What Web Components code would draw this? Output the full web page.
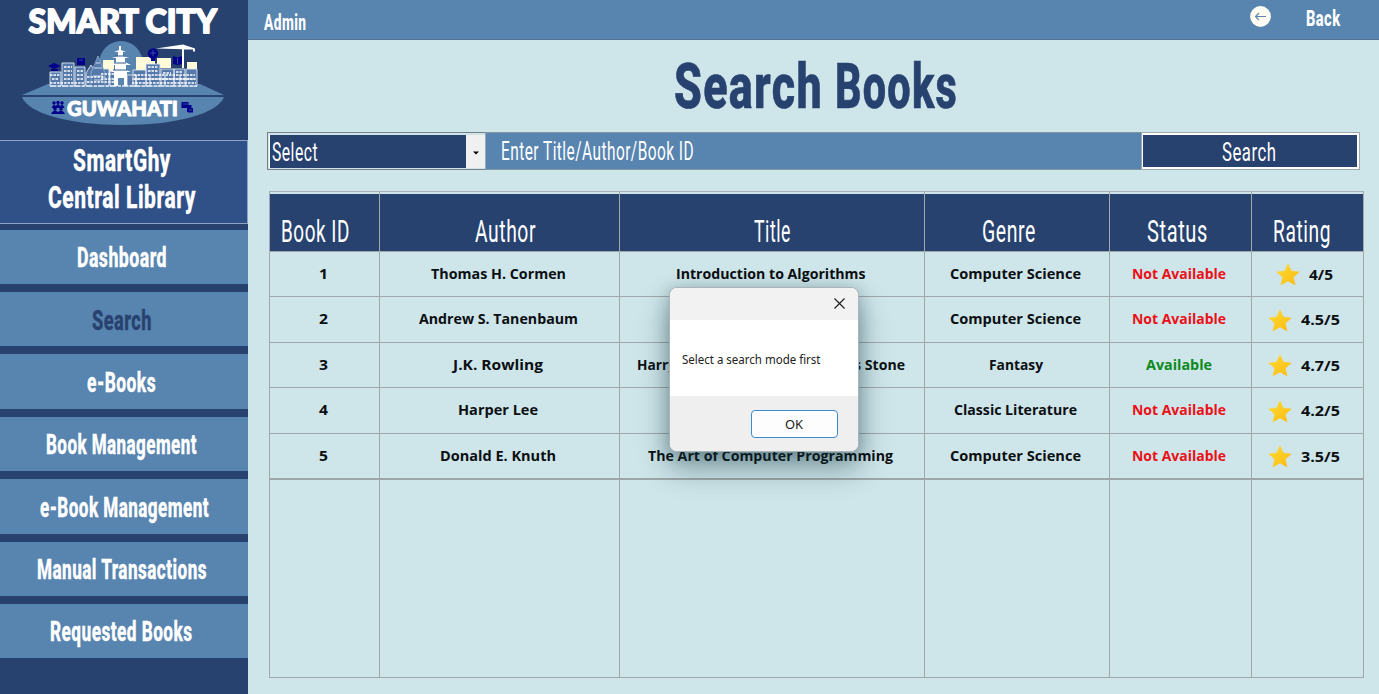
<!DOCTYPE html>
<html lang="en">
<head>
<meta charset="utf-8">
<title>SmartGhy Central Library</title>
<style>
html,body{margin:0;height:100%;overflow:hidden}
body{font-family:Roboto,"Liberation Sans",sans-serif}
</style>
</head>
<body>
<library-app></library-app>
<script>
const define = (name, html, setup) => customElements.define(name, class extends HTMLElement {
  connectedCallback() {
    if (this.shadowRoot) return;
    const root = this.attachShadow({mode: 'open'});
    root.innerHTML = html;
    if (setup) setup(this, root);
  }
});

/* Text condensed or expanded horizontally to a given width. */
customElements.define('fit-text', class extends HTMLElement {
  connectedCallback() {
    if (this.shadowRoot) return;
    const root = this.attachShadow({mode: 'open'});
    root.innerHTML = `<style>:host{display:inline-block;white-space:nowrap;line-height:1.172;flex:none}
      span{display:inline-block;transform-origin:0 50%}</style><span><slot></slot></span>`;
    const w = parseFloat(this.getAttribute('w'));
    this.style.width = w + 'px';
    const span = root.querySelector('span');
    const natural = span.getBoundingClientRect().width;
    if (natural) span.style.transform = `scaleX(${w / natural})`;
  }
});

define('city-logo', `<style>:host{display:block;height:139px}svg{display:block}
  text{font-family:Lato,"Open Sans",sans-serif;font-weight:900;fill:#fff;stroke:#fff;stroke-linejoin:round}</style>
<svg width="248" height="139" viewBox="0 0 248 139">
  <text x="28.500" y="32.500" font-size="32.500" textLength="188.500" lengthAdjust="spacingAndGlyphs" stroke-width="1.800">SMART CITY</text>
  <path d="M99 64a22 23 0 0 1 44 0v20H84q2-13 15-20z" fill="#5884b0"/>
  <path d="M22 95 48 84H200L224 95z" fill="#5884b0"/>
  <path d="M22 97H224C218 113 178 125 123 125S28 113 22 97z" fill="#5884b0"/>
  <g fill="#fffbd8"><path d="M103 60h11v18h-11zM136 57h19v13h-19zM157 58h14v10h-14zM187 62h10v15h-10z"/></g>
  <g fill="#5579aa" stroke="#dfe8f3" stroke-width=".9">
    <path d="M50 72h11v14H50zM62 63h12v23H62zM75 67h10v19H75zM86 73l5-8 5 8v13H86zM99 69h10v17H99zM110 71h7v15h-7zM127 75h9v11h-9zM133 70h13v16h-13zM146 64h14v22h-14zM161 69h13v17h-13zM174 69h11v17h-11zM186 69h11v17h-11z"/>
    <path d="M91 73l7-17 7 17v13H91z" stroke="#8aa8cb"/><path d="M94 68h8M96 63h4M93 76h10M94 80h9"/>
  </g>
  <path d="M50 75h10M52 79h7M50 83h34M64 67h8M64 71h8M64 75h8M64 79h8M77 71h6M77 75h6M77 79h6M87 77h18M87 82h28M101 74h14M101 79h14M134 75h61M134 79h61M132 83h64M148 67h10M148 71h10M163 73h8M176 72h7" stroke="#fff" stroke-width="1.500" stroke-dasharray="2.500 1"/>
  <path d="M132 79H196M136 75V86M150 75V86M165 75V86M180 75V86" stroke="#fff"/>
  <path d="M50 86H197" stroke="#dfe9f4" stroke-width="1.500" stroke-dasharray="6 2 3 1"/>
  <path d="M119 46h2v4l5 2h-3v4l6 2h-4v4l6 3h-5v5l5 2h-4v14h-3v-8h-6v8h-4V72h-4l5-2v-5h-5l6-3v-4h-4l6-2v-4h-4l5-2z" fill="#fff"/>
  <path d="M115 56h10M114 63h12M113 70h14" stroke="#36598f"/>
  <path d="M182 48h2v20h-2zM156 48.500l27-4 12 4v3h-2v-2z" fill="#fff"/>
  <g fill="#00008b"><circle cx="153" cy="53.500" r="5.200"/><path d="M151 58h4v3h-4zM77 58h8v7h-8zM173 56l4.500 1.500L182 56v8l-4.500 1-4.500-1zM48 66l6-3 7 3-7 3zM51 69h7v2h-7z"/>
    <circle cx="54" cy="103" r="1.700"/><circle cx="58" cy="102.500" r="1.700"/><circle cx="62" cy="103" r="1.700"/><circle cx="55" cy="109" r="1.700"/><circle cx="61" cy="109" r="1.700"/><path d="M51.500 108q2-5 4.500-2 2-4 4 0 3-3 4.500 2zM51 114q3-6 7-2 4-4 7 2z"/>
    <path d="M181.500 102h7v3h3v3h1.500v4h-6v-4h-5.500zM188 108h5v4.500h-5z"/></g>
  <path d="M153 50v6M150 53h6M177.500 58v6M79 60h4M183 104h5M189 110h3" stroke="#5579aa" stroke-width=".6"/>
  <text x="67" y="115.500" font-size="20.500" textLength="111" lengthAdjust="spacingAndGlyphs" stroke-width="1">GUWAHATI</text>
</svg>`);

define('nav-item', `<style>:host{display:flex;align-items:center;justify-content:center;height:54.300px;box-sizing:border-box;padding:2px 5px 0 0;background:#5884b0;color:#fff;font-weight:800;font-size:28.500px;letter-spacing:.025em;-webkit-text-stroke:.3px}
:host([active]){color:#284270}</style><slot></slot>`);

define('side-bar', `<style>:host{display:block;width:248px;background:#284270}
  .brand{height:84px;box-sizing:border-box;margin-top:1px;border:solid #8ba4c6;border-width:1px 1px 1.500px 0;background:#305088;color:#fff;font-weight:800;display:flex;flex-direction:column;align-items:center;padding:2px 4px 0 0;font-size:31.500px;letter-spacing:.025em;-webkit-text-stroke:.3px}
  nav{display:flex;flex-direction:column;gap:8.100px;margin-top:5.700px}</style>
<city-logo></city-logo>
<div class="brand"><fit-text w="98">SmartGhy</fit-text><fit-text w="148">Central Library</fit-text></div>
<nav>
<nav-item><fit-text w="90">Dashboard</fit-text></nav-item>
<nav-item active><fit-text w="60">Search</fit-text></nav-item>
<nav-item><fit-text w="69">e-Books</fit-text></nav-item>
<nav-item><fit-text w="151">Book Management</fit-text></nav-item>
<nav-item style="padding-right:0"><fit-text w="169">e-Book Management</fit-text></nav-item>
<nav-item><fit-text w="170">Manual Transactions</fit-text></nav-item>
<nav-item><fit-text w="142.500">Requested Books</fit-text></nav-item>
</nav>`);

define('top-bar', `<style>:host{display:flex;height:40px;box-sizing:border-box;background:#5884b0;border-bottom:1px solid #507594;color:#fff;font-weight:800;font-size:22.500px;padding:0 38.500px 0 16px;letter-spacing:.03em}
 .a{margin-top:9px}.b{margin-top:5px;margin-left:35px}svg{margin:6px 0 0 auto}</style>
<fit-text class="a" w="42.500">Admin</fit-text>
<svg width="21" height="21" viewBox="0 0 21 21"><circle cx="10.500" cy="10.500" r="10.400" fill="#fdfdf3"/><path d="M16 10.500H5.500M9 7l-3.500 3.500L9 14" fill="none" stroke="#5f86ac" stroke-width="1.200"/></svg>
<fit-text class="b" w="34.500">Back</fit-text>`);

define('search-bar', `<style>:host{display:flex;height:38px;width:1093px;font-size:26px;color:#fff;font-weight:400;letter-spacing:.03em}
 div{box-sizing:border-box;display:flex;align-items:center}
 .select{width:219px;border:1px solid #777f86;border-right-color:#9aa;padding:2px 0 1px 1px;background:#cfe4e9}
 .value{flex:1;height:100%;background:#284270;padding:2px 0 0 2px;border-left:1px solid #fff}
 .drop{width:19px;height:100%;background:#f0f0f0;justify-content:center;padding-top:3px}
 .input{flex:1;background:#5884b0;border:solid #8496a4;border-width:1px 0;padding-left:14.500px}
 .go{width:219px;border:1px solid #9da9ad;padding:0;background:#fff}
 .go div{flex:1;margin:1px 1px 1px 0;height:34px;background:#284270;justify-content:center;border:1px solid #fff;padding:2px 1px 0 0}</style>
<div class="select"><div class="value"><fit-text w="46">Select</fit-text></div><div class="drop"><svg width="6" height="4"><path d="M0 .5h6l-3 3z"/></svg></div></div>
<div class="input"><fit-text w="193">Enter Title/Author/Book ID</fit-text></div>
<div class="go"><div><fit-text w="54.500">Search</fit-text></div></div>`);

define('star-icon', `<style>:host{display:block;width:24px;height:23px}svg{display:block}</style>
<svg width="24" height="23" viewBox="0 0 24 23"><defs><linearGradient id="g" x2="1" y2="1"><stop offset="0" stop-color="#ffdc35"/><stop offset="1" stop-color="#fbb910"/></linearGradient></defs><path d="M12 .8 15.300 8l8 .900-6 5.300 1.800 7.800-7.100-4-7.100 4 1.800-7.800-6-5.300 8-.900z" fill="url(#g)" stroke="url(#g)" stroke-width=".5" stroke-linejoin="round"/></svg>`);

define('book-table', `<style>
 :host{display:grid;grid-template-columns:110px 240px 305px 185px 142px 112px;grid-template-rows:60px 45px 46px 45px 46px 46px 198px;width:1095px;border-left:1px solid #a0a8ab;border-top:1px solid #a5b2b5;box-sizing:border-box}
 .h,.c{box-sizing:border-box;border-right:1px solid #a0a8ab;border-bottom:1px solid #a0a8ab;display:flex;align-items:center;justify-content:center}
 .h{background:linear-gradient(#cfe4e9 2px,#284270 2px);color:#fff;font-size:32px;font-weight:400;letter-spacing:.03em;padding-top:19.500px}
 .c{font:700 14.600px/1 "Open Sans","Noto Sans",sans-serif;color:#0b0f12;padding:0 3px 1px 0}
 .c.last{border-bottom:2px solid #9fa6a9}
 .no{color:#ec1018}.yes{color:#0b8a1c}
 .r{gap:9px}
 .split{justify-content:space-between}</style>`, (host, root) => {
  const cell = (cls, html, style = '') => `<div class="${cls}" style="${style}">${html}</div>`;
  const fit = (text, w) => text ? `<fit-text w="${w}">${text}</fit-text>` : '';
  let out = '';
  [['Book ID', 69, 18], ['Author', 61, -11], ['Title', 37, -1], ['Genre', 54, 16], ['Status', 61, 6], ['Rating', 58, 11]]
    .forEach(([t, w, p]) => out += cell('h', fit(t, w), p > 0 ? `padding-right:${p}px` : `padding-left:${-p}px`));
  const rows = [
    ['1', 'Thomas H. Cormen', 135, fit('Introduction to Algorithms', 189.5), 'Computer Science', 131, 0, '4/5', 24],
    ['2', 'Andrew S. Tanenbaum', 159, '', 'Computer Science', 131, 0, '4.5/5', 39],
    ['3', 'J.K. Rowling', 90, fit('Harry', 39) + fit("’s Stone", 54), 'Fantasy', 54, 1, '4.7/5', 39],
    ['4', 'Harper Lee', 80, '', 'Classic Literature', 123, 0, '4.2/5', 39],
    ['5', 'Donald E. Knuth', 116, fit('The Art of Computer Programming', 245), 'Computer Science', 131, 0, '3.5/5', 39]];
  rows.forEach(([id, a, aw, title, g, gw, ok, r, rw], i) => {
    const c = i === 4 ? 'c last' : 'c';
    out += cell(c, fit(id, 9), 'padding-right:2px') + cell(c, fit(a, aw))
      + cell(c + (i === 2 ? ' split' : ''), title, i === 2 ? 'padding:0 19px 1px 17px' : '')
      + cell(c, fit(g, gw)) + cell(c + (ok ? ' yes' : ' no'), fit(ok ? 'Available' : 'Not Available', ok ? 66 : 94))
      + cell(c + ' r', '<star-icon></star-icon>' + fit(r, rw), 'padding:1px 7px 0 0');
  });
  for (let i = 0; i < 6; i++) out += cell('c', '');
  root.innerHTML += out;
});

define('message-box', `<style>:host{display:flex;flex-direction:column;position:absolute;left:669px;top:287px;width:190px;height:165px;box-sizing:border-box;border:1px solid #a9b6b9;border-radius:8px;overflow:hidden;background:#fff;box-shadow:0 16px 30px rgba(15,50,60,.42),0 2px 16px rgba(15,50,60,.26);color:#222;font:12.500px/1 "Noto Sans","Open Sans",sans-serif}
 .t{height:32px;background:#f2f2f2;display:flex;justify-content:flex-end;padding:10px 13px 0 0;box-sizing:border-box}
 .m{height:76px;display:flex;align-items:center;padding:4px 0 0 12px;box-sizing:border-box}
 .f{flex:1;background:#efefef;display:flex;justify-content:flex-end;padding:14px 20px 0 0}
 .ok{width:87px;height:28px;box-sizing:border-box;border:1px solid #3c8ccc;border-radius:4px;background:#fdfdfd;display:flex;align-items:center;justify-content:center;padding:2px 1px 0 0}</style>
<div class="t"><svg width="11" height="11"><path d="M.5.5l10 10M10.500.5l-10 10" stroke="#222" stroke-width="1.200"/></svg></div>
<div class="m"><fit-text w="138.500">Select a search mode first</fit-text></div>
<div class="f"><div class="ok"><fit-text w="18">OK</fit-text></div></div>`);

define('library-app', `<style>:host{display:flex;width:1379px;height:694px;background:#cee5e9;position:relative;overflow:hidden}
 main{flex:1}
 h1{margin:0;height:92px;box-sizing:border-box;display:flex;align-items:center;justify-content:center;gap:12px;font-size:63.500px;font-weight:800;color:#284270;padding:2px 0 0 5px;letter-spacing:.03em;-webkit-text-stroke:.7px}
 search-bar{margin-left:19px}book-table{margin:21px 0 0 21px}</style>
<side-bar></side-bar>
<main><top-bar></top-bar><h1><fit-text w="149">Search</fit-text><fit-text w="123">Books</fit-text></h1><search-bar></search-bar><book-table></book-table></main>
<message-box></message-box>`);
</script>
</body>
</html>
